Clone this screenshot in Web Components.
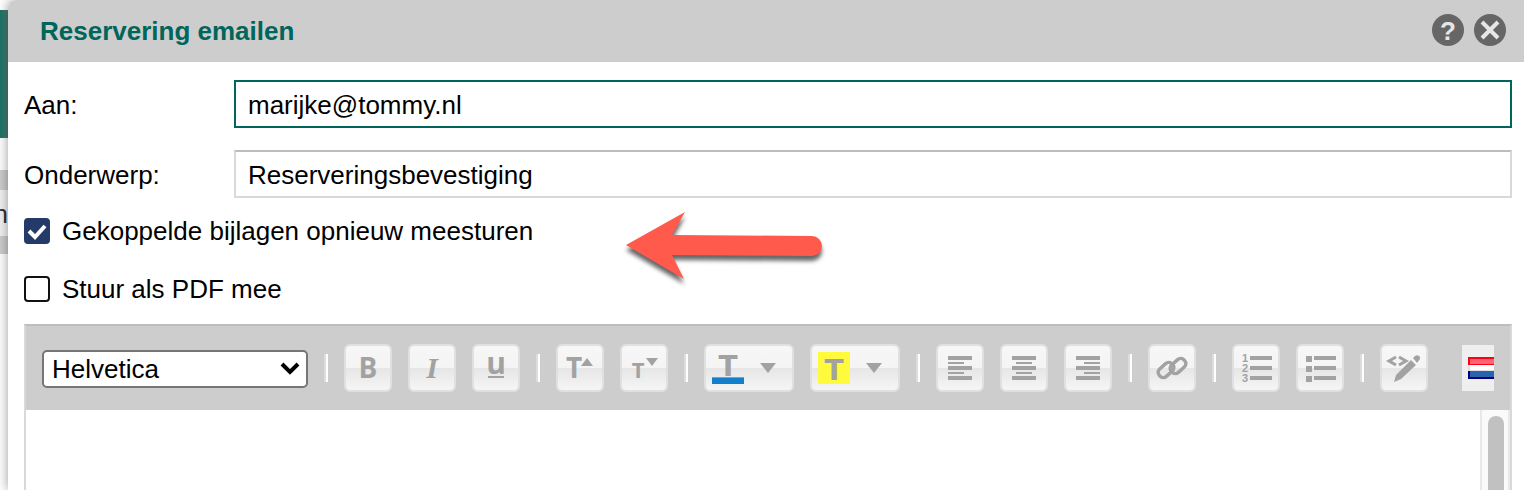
<!DOCTYPE html>
<html lang="nl">
<head>
<meta charset="utf-8">
<meta name="viewport" content="width=device-width, initial-scale=1">
<title>Reservering emailen</title>
<style>
  body {
    margin: 0;
    height: 100vh;
    overflow: hidden;
    background: #fff;
    color: #000;
    font-family: "Liberation Sans", Arial, sans-serif;
    font-size: 26px;
    line-height: 30px;
  }
</style>
</head>
<body>
<mail-app></mail-app>

<script>
// Icons for the toolbar, all on a 32x32 grid
const icons = {
  bold: '<text x="16" y="26" font-family="Open Sans" font-weight="700" font-size="28" text-anchor="middle">B</text>',
  italic: '<text x="16" y="26" font-family="Liberation Serif" font-weight="700" font-style="italic" font-size="30" text-anchor="middle">I</text>',
  underline: '<text x="16" y="22" font-family="Open Sans" font-weight="700" font-size="30" text-anchor="middle">u</text><path d="M8 24h16v2H8z"/>',
  larger: '<text x="10" y="26" font-family="Open Sans" font-weight="700" font-size="28" text-anchor="middle">T</text><path d="M17 14l6-8 6 8z"/>',
  smaller: '<text x="10" y="26" font-family="Open Sans" font-weight="700" font-size="22" text-anchor="middle">T</text><path d="M18 6h12l-6 8z"/>',
  color: '<text x="16" y="24" font-family="DejaVu Sans" font-weight="700" font-size="28" text-anchor="middle">T</text><path fill="#1480cc" d="M0 25h32v7H0z"/><path fill="#62a8d8" d="M0 25h32v1H0z"/>',
  highlight: '<path fill="#fffa3c" d="M0 0h32v32H0z"/><text x="16" y="28" font-family="DejaVu Sans" font-weight="700" font-size="28" text-anchor="middle">T</text>',
  left: '<path d="M4 4h24v4H4zM4 10h16v2H4zM4 14h24v4H4zM4 20h16v2H4zM4 24h24v4H4z"/>',
  center: '<path d="M4 4h24v4H4zM8 10h16v2H8zM4 14h24v4H4zM8 20h16v2H8zM4 24h24v4H4z"/>',
  right: '<path d="M4 4h24v4H4zM12 10h16v2H12zM4 14h24v4H4zM12 20h16v2H12zM4 24h24v4H4z"/>',
  link: `<g fill="none" stroke="#a2a2a2" stroke-width="3.5">
    <rect x="1.500" y="13" width="17" height="10" rx="4.500" transform="rotate(-42 10 18)"/>
    <rect x="13.500" y="9" width="17" height="10" rx="4.500" transform="rotate(-42 22 14)"/></g>`,
  numbered: `<g font-family="Liberation Sans" font-weight="700" font-size="11" text-anchor="middle">
    <text x="5" y="10">1</text><text x="5" y="20">2</text><text x="5" y="30">3</text></g>
    <path d="M10 4h22v4H10zM10 14h22v4H10zM10 24h22v4H10z"/>`,
  bullets: '<path d="M2 4h6v6H2zM2 14h6v6H2zM2 24h6v6H2zM10 4h22v4H10zM10 14h22v4H10zM10 24h22v4H10z"/>',
  source: `<path d="M8 5l-7 4 7 4M11 5l7 4-7 4" fill="none" stroke="#a2a2a2" stroke-width="3"/>
    <path d="M6 30l2-7L23 8l5 5-15 14zM25 6l2-2q3-2 5 1v2l-3 4z"/>`
};

// Toolbar order; '|' is a separator
const tools = [
  '|', ['bold', 'Vet'], ['italic', 'Cursief'], ['underline', 'Onderstrepen'],
  '|', ['larger', 'Tekst groter'], ['smaller', 'Tekst kleiner'],
  '|', ['color', 'Tekstkleur', 'menu'], ['highlight', 'Markeerkleur', 'menu'],
  '|', ['left', 'Links uitlijnen'], ['center', 'Centreren'], ['right', 'Rechts uitlijnen'],
  '|', ['link', 'Link'],
  '|', ['numbered', 'Genummerde lijst'], ['bullets', 'Opsomming'],
  '|', ['source', 'Broncode']
];

// Slice of the page behind the dialog
class PageBehind extends HTMLElement {
  constructor() {
    super();
    this.attachShadow({ mode: 'open' });
  }

  connectedCallback() {
    this.shadowRoot.innerHTML = `
      <style>
        :host { display: block; overflow: hidden; padding-top: 10px; background: #fff; }
        .bar { height: 128px; margin-bottom: 32px; background: linear-gradient(90deg, #1a7468, #4a7f75); }
        .row {
          display: flex;
          justify-content: flex-end;
          align-items: center;
          height: 46px;
          border: solid #cdcdcd;
          border-width: 20px 0 18px;
          background: #f2f2f2;
          color: #333;
        }
        span { padding-top: 2px; }
      </style>
      <div class="bar"></div>
      <div class="row"><span>n</span></div>
    `;
  }
}
customElements.define('page-behind', PageBehind);

// Label with a text input
class TextField extends HTMLElement {
  constructor() {
    super();
    this.attachShadow({ mode: 'open' });
  }

  connectedCallback() {
    this.shadowRoot.innerHTML = `
      <style>
        :host { display: flex; align-items: center; }
        label { flex: 0 0 210px; padding-top: 2px; }
        input {
          flex: 1;
          min-width: 0;
          height: 48px;
          box-sizing: border-box;
          padding: 2px 12px 0;
          border: 2px solid #d9d9d9;
          border-top-color: #bdbdbd;
          border-radius: 0;
          outline: none;
          background: #fff;
          color: inherit;
          font: inherit;
        }
        :host([active]) input { border-color: #00655a; }
      </style>
      <label for="field"><slot></slot></label>
      <input id="field" type="text" value="${this.getAttribute('value')}">
    `;
  }
}
customElements.define('text-field', TextField);

// Checkbox with its label
class CheckOption extends HTMLElement {
  constructor() {
    super();
    this.attachShadow({ mode: 'open' });
  }

  connectedCallback() {
    this.shadowRoot.innerHTML = `
      <style>
        :host { display: flex; }
        label { display: flex; align-items: center; gap: 12px; }
        .box { display: grid; }
        .box > * { grid-area: 1 / 1; width: 26px; height: 26px; }
        input {
          appearance: none;
          box-sizing: border-box;
          margin: 0;
          border: 2px solid #111;
          border-radius: 4px;
          background: #fff;
        }
        input:checked { border-color: #243a68; background: #243a68; }
        svg { pointer-events: none; visibility: hidden; }
        input:checked + svg { visibility: visible; }
      </style>
      <label>
        <span class="box">
          <input type="checkbox" ${this.hasAttribute('checked') ? 'checked' : ''}>
          <svg viewBox="0 0 26 26" aria-hidden="true"><path d="M5 13l6 6L21 8" fill="none" stroke="#fff" stroke-width="4"/></svg>
        </span>
        <slot></slot>
      </label>
    `;
  }
}
customElements.define('check-option', CheckOption);

// Toolbar button, optionally with a dropdown arrow
class ToolButton extends HTMLElement {
  constructor() {
    super();
    this.attachShadow({ mode: 'open' });
  }

  connectedCallback() {
    const menu = this.hasAttribute('menu');
    this.shadowRoot.innerHTML = `
      <style>
        :host { display: block; flex: none; }
        button {
          display: flex;
          align-items: center;
          gap: 16px;
          box-sizing: border-box;
          height: 48px;
          padding: 0 6px;
          border: 2px solid #e0e0e0;
          border-radius: 6px;
          background: linear-gradient(#f7f7f7, #f4f4f4 50%, #e6e6e6 50%, #f5f5f5);
          cursor: pointer;
        }
        button.menu { width: 90px; }
        svg { display: block; flex: none; overflow: visible; fill: #a2a2a2; }
      </style>
      <button type="button" class="${menu ? 'menu' : ''}" aria-label="${this.getAttribute('label')}">
        <svg width="32" height="32" viewBox="0 0 32 32">${icons[this.getAttribute('icon')]}</svg>
        ${menu ? '<svg width="16" height="10" viewBox="0 0 16 10"><path d="M0 0h16L8 10z"/></svg>' : ''}
      </button>
    `;
  }
}
customElements.define('tool-button', ToolButton);

class EditorToolbar extends HTMLElement {
  constructor() {
    super();
    this.attachShadow({ mode: 'open' });
  }

  connectedCallback() {
    this.shadowRoot.innerHTML = `
      <style>
        :host {
          display: flex;
          align-items: center;
          gap: 16px;
          padding: 18px 16px;
          background: #cdcdcd;
        }
        .font { display: grid; flex: 0 0 266px; align-items: center; padding-top: 2px; }
        .font > * { grid-area: 1 / 1; }
        .font svg { justify-self: end; margin-right: 8px; pointer-events: none; }
        select {
          appearance: none;
          box-sizing: border-box;
          height: 38px;
          padding: 0 8px;
          border: 2px solid #767676;
          border-radius: 5px;
          background: #fff;
          color: #000;
          font: inherit;
        }
        .sep {
          flex: none;
          box-sizing: border-box;
          width: 4px;
          height: 28px;
          border-left: 2px solid #dcdcdc;
          background: #fff;
        }
        .language {
          display: flex;
          flex: none;
          justify-content: flex-end;
          align-items: center;
          box-sizing: border-box;
          width: 32px;
          height: 46px;
          margin-left: auto;
          padding: 0;
          border: 0;
          background: #efefef;
        }
      </style>
      <div class="font">
        <select aria-label="Lettertype">
          <option>Helvetica</option>
          <option>Arial</option>
          <option>Verdana</option>
        </select>
        <svg width="20" height="14" viewBox="0 0 20 14" aria-hidden="true"><path d="M2 2l8 8 8-8" fill="none" stroke="#000" stroke-width="4"/></svg>
      </div>
      ${tools.map(tool => tool === '|'
        ? '<span class="sep"></span>'
        : `<tool-button icon="${tool[0]}" label="${tool[1]}" ${tool[2] || ''}></tool-button>`
      ).join('')}
      <button type="button" class="language" aria-label="Nederlands">
        <svg width="26" height="22" viewBox="0 0 26 22">
          <path fill="#ff0014" d="M0 0h26v8H0z"/>
          <path fill="#ff6470" d="M2 2h24v5H2z"/>
          <path fill="#e4dce4" d="M0 8h26v6H0z"/>
          <path fill="#fff" d="M2 8h24v5H2z"/>
          <path fill="#000080" d="M0 14h26v8H0z"/>
          <path fill="#2864ac" d="M2 14h24v6H2z"/>
        </svg>
      </button>
    `;
  }
}
customElements.define('editor-toolbar', EditorToolbar);

class MailEditor extends HTMLElement {
  constructor() {
    super();
    this.attachShadow({ mode: 'open' });
  }

  connectedCallback() {
    this.shadowRoot.innerHTML = `
      <style>
        :host {
          display: flex;
          flex-direction: column;
          border: 2px solid #d9d9d9;
          border-top-color: #bdbdbd;
          border-bottom: 0;
        }
        .area { display: flex; flex: 1; min-height: 0; }
        textarea {
          flex: 1;
          min-width: 0;
          padding: 16px;
          border: 0;
          outline: none;
          resize: none;
          font: inherit;
        }
        .scrollbar {
          display: flex;
          flex: 0 0 16px;
          padding: 6px 4px 0 6px;
          border: solid #e8e8e8;
          border-width: 0 2px;
          background: #fafafa;
        }
        .thumb { flex: 1; border-radius: 8px 8px 0 0; background: #c1c1c1; }
      </style>
      <editor-toolbar></editor-toolbar>
      <div class="area">
        <textarea aria-label="Bericht"></textarea>
        <div class="scrollbar"><div class="thumb"></div></div>
      </div>
    `;
  }
}
customElements.define('mail-editor', MailEditor);

// Red arrow pointing at the attachments option
class CalloutArrow extends HTMLElement {
  constructor() {
    super();
    this.attachShadow({ mode: 'open' });
  }

  connectedCallback() {
    this.shadowRoot.innerHTML = `
      <style>
        :host { display: block; pointer-events: none; }
        svg { display: block; overflow: visible; filter: drop-shadow(0 5px 2px rgba(0, 0, 0, .6)); }
      </style>
      <svg width="196" height="67" viewBox="0 0 196 67" aria-hidden="true">
        <path fill="#ff5a4c" d="M0 33L59 0 46 23 186 24a10 10 0 0 1 0 20L46 43 58 67z"/>
      </svg>
    `;
  }
}
customElements.define('callout-arrow', CalloutArrow);

class MailDialog extends HTMLElement {
  constructor() {
    super();
    this.attachShadow({ mode: 'open' });
  }

  connectedCallback() {
    this.shadowRoot.innerHTML = `
      <style>
        :host {
          display: flex;
          flex-direction: column;
          position: relative;
          min-width: 0;
          border-top-left-radius: 8px;
          background: #fff;
          box-shadow: 0 0 12px rgba(0, 0, 0, .4);
        }
        header {
          display: flex;
          align-items: center;
          gap: 10px;
          box-sizing: border-box;
          height: 62px;
          padding: 0 18px 2px 32px;
          border-top-left-radius: 8px;
          background: #cdcdcd;
        }
        h1 { flex: 1; margin: 0; padding-top: 2px; color: #00655a; font-size: 26px; }
        header button { padding: 0; border: 0; background: none; cursor: pointer; }
        header svg { display: block; overflow: visible; }
        form {
          display: flex;
          flex: 1;
          flex-direction: column;
          min-height: 0;
          padding: 18px 12px 0 16px;
        }
        .fields { display: grid; gap: 22px; }
        .options { display: grid; gap: 28px; margin: 18px 0 20px; }
        mail-editor { flex: 1; min-height: 0; }
        callout-arrow { position: absolute; left: 618px; top: 212px; }
      </style>
      <header>
        <h1>Reservering emailen</h1>
        <button type="button" aria-label="Help">
          <svg width="32" height="32" viewBox="0 0 32 32">
            <circle cx="16" cy="16" r="16" fill="#666"/>
            <text x="16" y="26" fill="#e6e6e6" font-family="Liberation Sans" font-weight="700" font-size="26" text-anchor="middle">?</text>
          </svg>
        </button>
        <button type="button" aria-label="Sluiten">
          <svg width="32" height="32" viewBox="0 0 32 32">
            <circle cx="16" cy="16" r="16" fill="#666"/>
            <path d="M8 8l16 16M24 8L8 24" stroke="#e6e6e6" stroke-width="4"/>
          </svg>
        </button>
      </header>
      <form>
        <div class="fields">
          <text-field value="marijke@tommy.nl" active>Aan:</text-field>
          <text-field value="Reserveringsbevestiging">Onderwerp:</text-field>
        </div>
        <div class="options">
          <check-option checked>Gekoppelde bijlagen opnieuw meesturen</check-option>
          <check-option>Stuur als PDF mee</check-option>
        </div>
        <mail-editor></mail-editor>
      </form>
      <callout-arrow></callout-arrow>
    `;
  }
}
customElements.define('mail-dialog', MailDialog);

class MailApp extends HTMLElement {
  constructor() {
    super();
    this.attachShadow({ mode: 'open' });
  }

  connectedCallback() {
    this.shadowRoot.innerHTML = `
      <style>
        :host { display: grid; grid-template: 100vh / 8px 1fr; }
      </style>
      <page-behind></page-behind>
      <mail-dialog></mail-dialog>
    `;
  }
}
customElements.define('mail-app', MailApp);
</script>
</body>
</html>
